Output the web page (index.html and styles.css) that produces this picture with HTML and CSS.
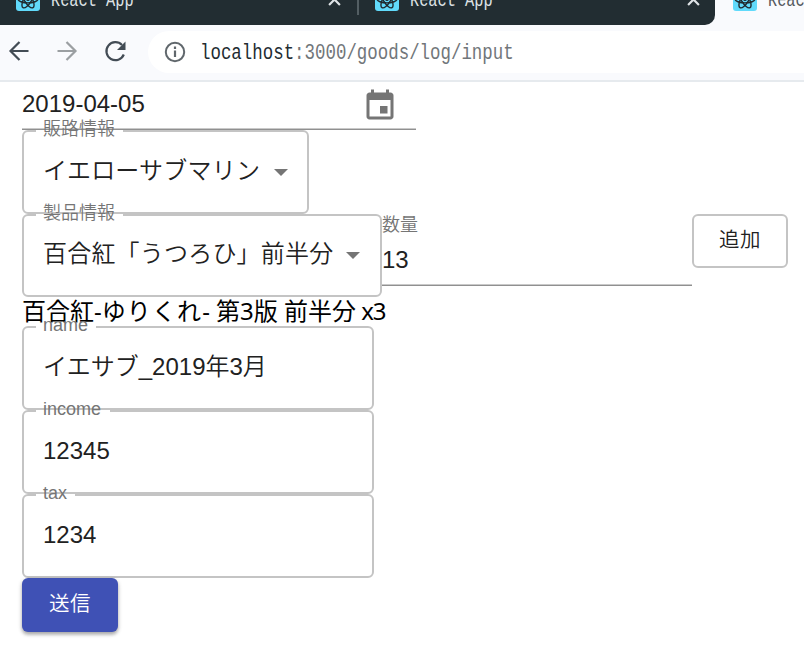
FILE: index.html
```html
<!DOCTYPE html>
<html lang="ja">
<head>
<meta charset="utf-8">
<title>React App</title>
<link rel="stylesheet" href="styles.css">
</head>
<body>
<svg class="defs" width="0" height="0" aria-hidden="true">
  <symbol id="react" viewBox="0 0 24 24">
    <rect width="24" height="24" rx="3" fill="#61dafb"/>
    <g fill="none" stroke="#20292e" stroke-width="1.4">
      <ellipse cx="12" cy="12" rx="10" ry="3.9"/>
      <ellipse cx="12" cy="12" rx="10" ry="3.9" transform="rotate(60 12 12)"/>
      <ellipse cx="12" cy="12" rx="10" ry="3.9" transform="rotate(120 12 12)"/>
    </g>
    <circle cx="12" cy="12" r="2" fill="#20292e"/>
  </symbol>
  <symbol id="close" viewBox="0 0 12 12">
    <path d="M1 1L11 11M11 1L1 11" fill="none" stroke="#dfe3e6" stroke-width="2"/>
  </symbol>
</svg>
<header class="chrome">
  <div class="tabs">
    <div class="tab">
      <svg class="favicon"><use href="#react"/></svg>
      <span class="tab-title">React App</span>
      <svg class="close"><use href="#close"/></svg>
    </div>
    <div class="tab last">
      <svg class="favicon"><use href="#react"/></svg>
      <span class="tab-title">React App</span>
      <svg class="close"><use href="#close"/></svg>
    </div>
    <div class="tab active">
      <svg class="favicon"><use href="#react"/></svg>
      <span class="tab-title">React App</span>
    </div>
  </div>
  <nav class="toolbar">
    <svg class="nav-icon" viewBox="0 0 24 24"><path d="M21.500 12H3.500M12.500 3L3.500 12L12.500 21" stroke="#434c55"/></svg>
    <svg class="nav-icon" viewBox="0 0 24 24"><path d="M2.500 12H20.500M11.500 3L20.500 12L11.500 21" stroke="#9b9fa2"/></svg>
    <svg class="nav-icon" viewBox="0 0 24 24"><path d="M20.800 15.500A9 9 0 1 1 19 6" stroke="#434c55"/><path d="M22.500 2.500V11H14Z" fill="#434c55" stroke="none"/></svg>
    <div class="address">
      <svg class="info" viewBox="0 0 22 22"><circle cx="11" cy="11" r="9.200" fill="none" stroke="#60676c" stroke-width="2"/><path d="M11 9.500V16M11 5.500V8" stroke="#60676c" stroke-width="2.200"/></svg>
      <span class="url"><span class="host">localhost</span>:3000/goods/log/input</span>
    </div>
  </nav>
</header>
<main class="page">
  <div class="date-field">
    <span>2019-04-05</span>
    <svg class="calendar" viewBox="0 0 24 24"><path fill="#757575" d="M17 12h-5v5h5v-5zM16 1v2H8V1H6v2H5c-1.110 0-1.990.9-1.990 2L3 19c0 1.100.89 2 2 2h14c1.100 0 2-.9 2-2V5c0-1.100-.9-2-2-2h-1V1h-2zm3 18H5V8h14v11z"/></svg>
  </div>
  <fieldset class="field channel">
    <legend class="w-kanji"><span>販路情報</span></legend>
    <div class="value"><span>イエローサブマリン</span><i class="caret"></i></div>
  </fieldset>
  <div class="product-row">
    <fieldset class="field product">
      <legend class="w-kanji"><span>製品情報</span></legend>
      <div class="value"><span>百合紅「うつろひ」前半分</span><i class="caret"></i></div>
    </fieldset>
    <div class="quantity">
      <label>数量</label>
      <div class="quantity-value">13</div>
    </div>
    <button class="button add">追加</button>
  </div>
  <div class="item">百合紅-<span class="kana">ゆりくれ</span>- 第3版 前半分<span class="count"> x3</span></div>
  <fieldset class="field">
    <legend class="w-name"><span>name</span></legend>
    <div class="value name">イエサブ_2019年3月</div>
  </fieldset>
  <fieldset class="field">
    <legend class="w-income"><span>income</span></legend>
    <div class="value latin">12345</div>
  </fieldset>
  <fieldset class="field">
    <legend class="w-tax"><span>tax</span></legend>
    <div class="value latin">1234</div>
  </fieldset>
  <button class="button submit">送信</button>
</main>
</body>
</html>
```
FILE: styles.css
```css
* { box-sizing: border-box; }
body {
  margin: 0;
  width: 804px;
  height: 648px;
  overflow: hidden;
  background: #fff;
  color: #212121;
  font: 350 24px/28px "Liberation Sans", "Noto Sans CJK JP", sans-serif;
}
svg { display: block; flex: none; }
.defs { position: absolute; }

.chrome { height: 82px; background: #f9fafd; border-bottom: 2px solid #e6eaee; }
.tabs { display: flex; height: 25px; overflow: hidden; }
.tab {
  display: flex;
  align-items: flex-start;
  flex: none;
  width: 358px;
  height: 25px;
  padding-left: 16px;
  background: #222d32;
  color: #dfe3e6;
  position: relative;
}
.tab:first-child::after {
  content: "";
  position: absolute;
  right: -1px;
  top: 0;
  width: 2px;
  height: 15px;
  background: #535e63;
  z-index: 1;
}
.tab.last { width: 357px; padding-left: 17px; border-bottom-right-radius: 10px; }
.tab.active { width: 90px; padding-left: 18px; background: #f9fafd; color: #53585c; }
.favicon { width: 24px; height: 24px; margin-top: -13px; }
.tab-title {
  width: 267px;
  margin: -11px 0 0 11px;
  font: 19.5px/24px "Liberation Mono", monospace;
  transform: scaleX(.785);
  transform-origin: 0 0;
  white-space: pre;
}
.close { width: 13px; height: 13px; margin: -7px 0 0 10px; }

.toolbar { display: flex; align-items: center; height: 55px; padding: 0 0 1px 7px; }
.nav-icon { width: 24px; height: 24px; margin: -2px 24px 0 0; fill: none; stroke-width: 2.2; }
.address {
  display: flex;
  align-items: center;
  flex: 1;
  height: 42px;
  padding-left: 16px;
  margin-left: -3px;
  background: #fff;
  border-radius: 21px 0 0 21px;
}
.info { width: 22px; height: 22px; }
.url {
  margin: 4px 0 0 14px;
  color: #71767a;
  font: 22px/28px "Liberation Mono", monospace;
  transform: scaleX(.792);
  transform-origin: 0 50%;
  white-space: nowrap;
}
.host { color: #222b31; }

.page { padding-left: 22px; }
.date-field {
  display: flex;
  justify-content: space-between;
  align-items: center;
  width: 394px;
  height: 48px;
  padding: 0 18px 4px 0;
  border-bottom: 1px solid #909090;
  box-shadow: inset 0 -1px #c9c9c9;
}
.calendar { width: 36px; height: 36px; margin-top: 5px; }

.field {
  width: 352px;
  height: 84px;
  min-width: 0;
  margin: 0;
  padding: 0 19px 0 12px;
  border: 2px solid #c4c4c4;
  border-radius: 6px;
}
.field legend {
  height: 2px;
  padding: 0 0 0 7px;
  font-size: 18px;
  line-height: 2px;
  color: #757575;
  white-space: nowrap;
}
.field legend span { display: block; position: relative; top: -2px; }
.w-kanji { width: 87px; }
.w-name { width: 60px; }
.w-income { width: 74px; }
.w-tax { width: 39px; }
.value {
  display: flex;
  align-items: center;
  justify-content: space-between;
  height: 77px;
  padding-left: 7px;
  white-space: nowrap;
}
.value.latin, .value.name { height: 78px; }
.value > span { letter-spacing: .2px; }
.channel { width: 287px; }
.product { width: 360px; flex: none; height: 83px; }
.product .value { height: 76px; }
.product .caret { margin: 3px 1px 0 0; }
.caret {
  margin-top: 4px;
  border: 7.5px solid transparent;
  border-top-color: #757575;
  border-bottom: 0;
}
.product-row { display: flex; align-items: flex-start; }
.quantity {
  width: 310px;
  height: 72px;
  border-bottom: 1px solid #c9c9c9;
  box-shadow: inset 0 -1px #909090;
}
.quantity label { display: block; height: 32px; padding-top: 1px; font-size: 18px; line-height: 20px; color: #757575; }
.quantity-value { line-height: 28px; }
.button {
  display: block;
  width: 96px;
  height: 54px;
  padding: 0 0 3px;
  border-radius: 6px;
  font: 350 20.5px/32px "Liberation Sans", "Noto Sans CJK JP", sans-serif;
  letter-spacing: .6px;
}
.quantity { border-bottom-color: #909090; box-shadow: inset 0 -1px #c9c9c9; }
.add { background: #fff; border: 2px solid #c4c4c4; color: #212121; }
.submit {
  border: 0;
  background: #3f51b5;
  color: #fff;
  box-shadow: 0 2px 4px rgba(0,0,0,.3), 0 3px 3px rgba(0,0,0,.1);
}
.item {
  height: 29px;
  color: #000;
  font: 24px/27px "Noto Sans", "Noto Sans CJK JP", sans-serif;
  white-space: nowrap;
}
.kana { letter-spacing: 1.1px; }
.count { letter-spacing: -1.1px; }
```
